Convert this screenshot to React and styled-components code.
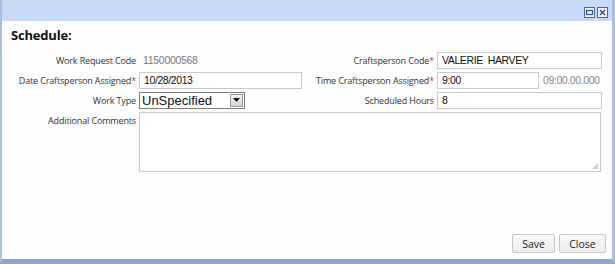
import React from 'react'
import styled, { createGlobalStyle } from 'styled-components'

const GlobalStyle = createGlobalStyle`
    html, body {
        margin: 0;
        padding: 0;
        background: #ffffff;
    }
    #root {
        width: 615px;
        height: 264px;
    }
`

const Window = styled.div`
    box-sizing: border-box;
    width: 615px;
    height: 264px;
    display: flex;
    flex-direction: column;
    background: #fdfdfe;
    border-left: 2px solid #a9bde0;
    border-right: 3px solid #a9bde0;
    border-bottom: 5px solid #8ea6cf;
    font-family: "Open Sans", "DejaVu Sans", sans-serif;
`

const TitleBar = styled.div`
    height: 21px;
    flex: none;
    display: flex;
    justify-content: flex-end;
    align-items: center;
    gap: 2px;
    padding-right: 4px;
    padding-top: 4px;
    box-sizing: border-box;
    background: #c8daf7;
`

const WinButton = styled.div`
    width: 11px;
    height: 11px;
    display: flex;
    align-items: center;
    justify-content: center;
`

const Body = styled.div`
    flex: 1;
    display: flex;
    flex-direction: column;
    padding: 6px 6px 0 9px;
`

const Heading = styled.h1`
    margin: 0 0 9px 0;
    font-size: 13px;
    line-height: 16px;
    font-weight: 700;
    color: #111;
    letter-spacing: -0.2px;
`

const Form = styled.div`
    display: grid;
    grid-template-columns: 125px 163px 129px 165px;
    grid-auto-rows: 16px;
    column-gap: 3px;
    row-gap: 4px;
    align-items: center;
`

const Label = styled.div`
    font-size: 9px;
    letter-spacing: -0.15px;
    color: #333;
    text-align: right;
    white-space: nowrap;
    align-self: ${props => props.top ? 'start' : 'center'};
    padding-top: ${props => props.top ? '2px' : '0'};
`

const Req = styled.span`
    color: #c33;
`

const Value = styled.div`
    font-family: "Liberation Sans", Arial, sans-serif;
    font-size: 10.5px;
    letter-spacing: -0.3px;
    color: #7a7a7a;
    padding-left: 4px;
`

const TextBox = styled.div`
    box-sizing: border-box;
    width: ${props => props.w || '100%'};
    height: 17px;
    border: 1px solid #c9c9c9;
    background: #fff;
    font-family: "Liberation Sans", Arial, sans-serif;
    font-size: 10.5px;
    letter-spacing: -0.4px;
    color: #111;
    padding-left: 4px;
    line-height: 15px;
    white-space: pre;
`

const Split = styled.div`
    display: flex;
    align-items: center;
    gap: 4px;
`

const Hint = styled.span`
    font-family: "Liberation Sans", Arial, sans-serif;
    font-size: 10.5px;
    letter-spacing: -0.4px;
    color: #8a8a8a;
`

const Select = styled.div`
    box-sizing: border-box;
    width: 106px;
    height: 17px;
    border: 1px solid #7a7a7a;
    background: #fff;
    display: flex;
    align-items: center;
    font-family: "Liberation Sans", Arial, sans-serif;
    font-size: 13px;
    color: #111;
`

const SelectText = styled.span`
    flex: 1;
    padding-left: 2px;
`

const Arrow = styled.div`
    width: 13px;
    height: 13px;
    margin-right: 1px;
    background: linear-gradient(#f4f4f4, #d4d4d4);
    border: 1px solid #9a9a9a;
    box-sizing: border-box;
    display: flex;
    align-items: center;
    justify-content: center;
`

const TextArea = styled.div`
    grid-column: 2 / 5;
    grid-row: span 3;
    box-sizing: border-box;
    width: 462px;
    height: 60px;
    align-self: start;
    border: 1px solid #c9c9c9;
    background: #fff;
    position: relative;
`

const Grip = styled.div`
    position: absolute;
    right: 2px;
    bottom: 2px;
    width: 6px;
    height: 6px;
    background-image: radial-gradient(#999 0.6px, transparent 0.8px);
    background-size: 2px 2px;
    clip-path: polygon(100% 0, 100% 100%, 0 100%);
`

const Footer = styled.div`
    margin-top: auto;
    display: flex;
    justify-content: flex-end;
    gap: 4px;
    padding: 0 0 6px 0;
`

const Button = styled.button`
    box-sizing: border-box;
    height: 19px;
    width: ${props => props.w};
    padding: 0;
    border: 1px solid #c8c8c8;
    border-radius: 2px;
    background: linear-gradient(#fafafa, #ececec);
    font-family: "Open Sans", "DejaVu Sans", sans-serif;
    font-size: 10.5px;
    color: #222;
`

export default function App() {
    return (
        <>
            <GlobalStyle />
            <Window>
                <TitleBar>
                    <WinButton>
                        <svg width="11" height="11" viewBox="0 0 11 11">
                            <rect x="0.5" y="0.5" width="10" height="10" fill="#eef3fb" stroke="#4a6a9c" />
                            <rect x="2.5" y="3.5" width="6" height="4" fill="none" stroke="#2d4f86" strokeWidth="1.2" />
                        </svg>
                    </WinButton>
                    <WinButton>
                        <svg width="11" height="11" viewBox="0 0 11 11">
                            <rect x="0.5" y="0.5" width="10" height="10" fill="#eef3fb" stroke="#4a6a9c" />
                            <path d="M3 3 L8 8 M8 3 L3 8" stroke="#2d4f86" strokeWidth="1.4" />
                        </svg>
                    </WinButton>
                </TitleBar>
                <Body>
                    <Heading>Schedule:</Heading>
                    <Form>
                        <Label>Work Request Code</Label>
                        <Value>1150000568</Value>
                        <Label>Craftsperson Code<Req>*</Req></Label>
                        <TextBox>VALERIE  HARVEY</TextBox>

                        <Label>Date Craftsperson Assigned<Req>*</Req></Label>
                        <TextBox>10/28/2013</TextBox>
                        <Label>Time Craftsperson Assigned<Req>*</Req></Label>
                        <Split>
                            <TextBox w="102px">9:00</TextBox>
                            <Hint>09:00.00.000</Hint>
                        </Split>

                        <Label>Work Type</Label>
                        <Select>
                            <SelectText>UnSpecified</SelectText>
                            <Arrow>
                                <svg width="7" height="4" viewBox="0 0 7 4">
                                    <path d="M0 0 H7 L3.5 4 Z" fill="#111" />
                                </svg>
                            </Arrow>
                        </Select>
                        <Label>Scheduled Hours</Label>
                        <TextBox>8</TextBox>

                        <Label top>Additional Comments</Label>
                        <TextArea>
                            <Grip />
                        </TextArea>
                    </Form>
                    <Footer>
                        <Button w="43px">Save</Button>
                        <Button w="47px">Close</Button>
                    </Footer>
                </Body>
            </Window>
        </>
    )
}
